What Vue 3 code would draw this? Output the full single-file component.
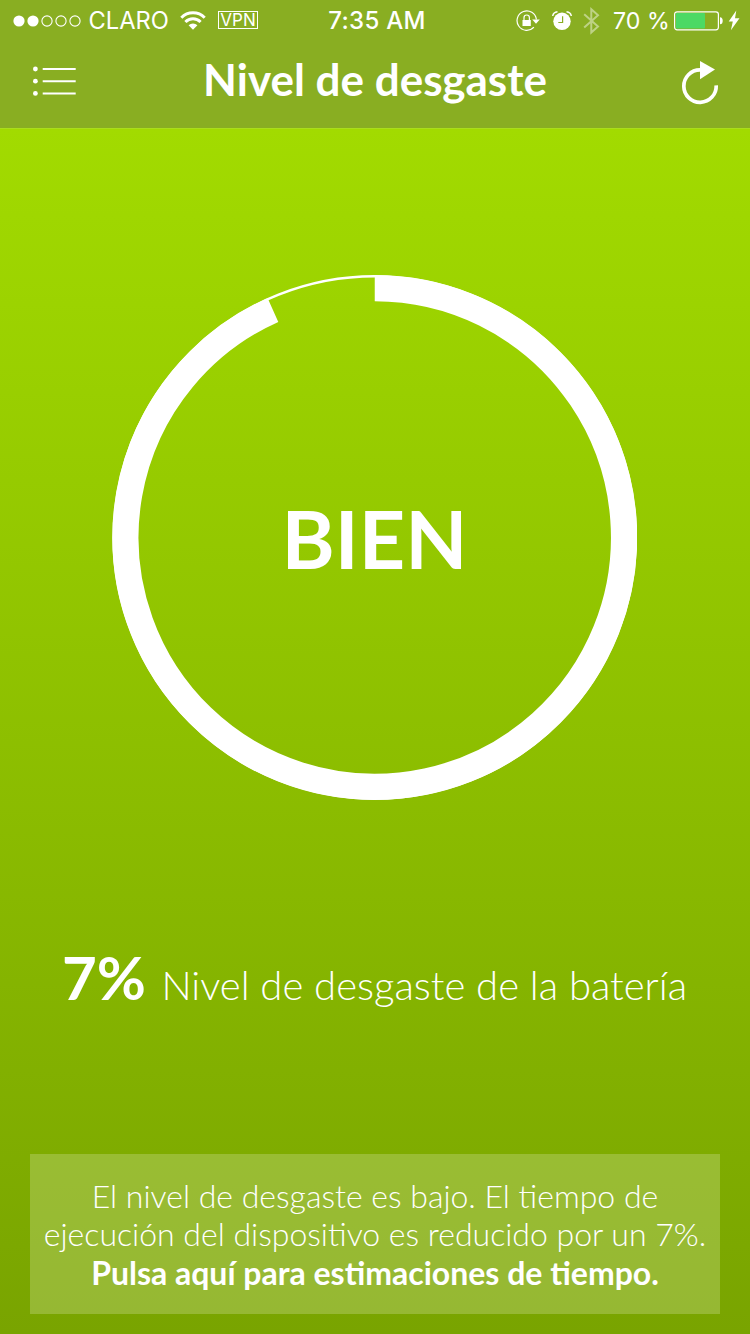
<script setup>
import { computed } from 'vue'

const wear = 7
const cx = 262.75
const cy = 262.5
const radius = 249.2
const gapDegrees = 24.1

const arc = computed(() => {
  const a = (gapDegrees * Math.PI) / 180
  const x = cx - radius * Math.sin(a)
  const y = cy - radius * Math.cos(a)
  return `M${cx} ${cy - radius}A${radius} ${radius} 0 1 1 ${x.toFixed(2)} ${y.toFixed(2)}`
})
</script>

<template>
  <div class="screen">
    <header class="top">
      <div class="status">
        <div class="side left">
          <svg class="signal" width="68" height="12" viewBox="0 0 68 12">
            <circle cx="6" cy="6" r="5.6" fill="#fff" />
            <circle cx="20" cy="6" r="5.6" fill="#fff" />
            <circle v-for="x in [34, 48, 62]" :key="x" :cx="x" cy="6" r="5.1" fill="none" stroke="#fff" stroke-width="1.1" />
          </svg>
          <span class="carrier">CLARO</span>
          <svg class="wifi" width="26" height="19" viewBox="0 0 26 19">
            <g fill="none" stroke="#fff" stroke-width="3">
              <path d="M1.3 6.7a16.5 16.5 0 0 1 23.4 0" />
              <path d="M5.4 11a10.7 10.7 0 0 1 15.2 0" />
            </g>
            <path d="M8.6 14.3a6.2 6.2 0 0 1 8.8 0L13 18.7z" fill="#fff" />
          </svg>
          <span class="vpn">VPN</span>
        </div>
        <span class="clock">7:35 AM</span>
        <div class="side right">
          <svg class="lock" width="24" height="22" viewBox="0 0 24 22">
            <path d="M17.9 17.2A9.7 9.7 0 1 1 20.4 9.5" fill="none" stroke="#fff" stroke-width="1.2" />
            <path d="M16.2 9.4h7.6L20 13.8z" fill="#fff" />
            <path d="M6.5 10h8.3v6H6.5z" fill="#fff" />
            <path d="M8 10V7.7a2.7 2.7 0 0 1 5.4 0V10" fill="none" stroke="#fff" stroke-width="1.2" />
          </svg>
          <svg class="alarm" width="20" height="20" viewBox="0 0 20 20">
            <circle cx="10" cy="10.3" r="8.7" fill="#fff" />
            <path d="M10.6 5.3v6.2H6.3" fill="none" stroke="#89ae22" stroke-width="1.2" />
            <path d="M.7 5Q1.3 1.3 5.5.8M19.3 5Q18.7 1.3 14.5.8" fill="none" stroke="#fff" stroke-width="1.5" />
          </svg>
          <svg class="bluetooth" width="17" height="28" viewBox="0 0 17 28">
            <path d="M1.2 7.2L15 19.5L8.3 25.5V2.2L15 8.2L1.2 20.5" fill="none" stroke="#fff" stroke-opacity=".45" stroke-width="2" />
          </svg>
          <span class="charge">70 %</span>
          <svg class="battery" width="49" height="20" viewBox="0 0 49 20">
            <rect x=".6" y=".8" width="43.8" height="18" rx="2.5" fill="none" stroke="#fff" stroke-width="1.2" />
            <rect x="1.8" y="2" width="29.2" height="15.6" rx="1" fill="#4cd964" />
            <path d="M46 6.3q2.7 0 2.7 3.5T46 13.3z" fill="#fff" />
          </svg>
          <svg class="bolt" width="12" height="21" viewBox="0 0 12 21">
            <path d="M8.3.5L.7 11.5h4.1L2.9 20.3L11.5 8.2H7z" fill="#fff" />
          </svg>
        </div>
      </div>
      <nav class="nav">
        <svg class="menu" width="44" height="32" viewBox="0 0 44 32">
          <g v-for="y in [4, 16.2, 28.4]" :key="y">
            <circle cx="2.4" :cy="y" r="2.4" fill="#fff" />
            <path :d="`M9.7 ${y}h33`" stroke="#fff" stroke-width="2" />
          </g>
        </svg>
        <h1>Nivel de desgaste</h1>
        <svg class="refresh" width="38" height="44" viewBox="0 0 38 44">
          <path d="M19 8.9A16.2 16.2 0 1 0 35.2 24.3" fill="none" stroke="#fff" stroke-width="3.7" />
          <path d="M19 0L34 8.5L19 18.3z" fill="#fff" />
        </svg>
      </nav>
    </header>

    <main class="content">
      <div class="dial">
        <svg width="525" height="525" viewBox="0 0 525 525">
          <circle :cx="cx" :cy="cy" r="261.2" fill="none" stroke="#fff" stroke-width="2.6" />
          <path :d="arc" fill="none" stroke="#fff" stroke-width="26" />
        </svg>
        <strong class="verdict">BIEN</strong>
      </div>
      <p class="summary">
        <strong>{{ wear }}%</strong><span>Nivel de desgaste de la batería</span>
      </p>
      <section class="note">
        <span>El nivel de desgaste es bajo. El tiempo de</span>
        <span>ejecución del dispositivo es reducido por un {{ wear }}%.</span>
        <strong>Pulsa aquí para estimaciones de tiempo.</strong>
      </section>
    </main>
  </div>
</template>

<style>
body {
  margin: 0;
}
</style>

<style scoped>
.screen {
  width: 750px;
  height: 1334px;
  display: flex;
  flex-direction: column;
  overflow: hidden;
  color: #fff;
  font-family: Lato, "Liberation Sans", sans-serif;
  background: linear-gradient(#a2db00 128px, #79a400 1334px);
}
.top {
  height: 128px;
  flex: none;
  background: #89ae22;
  box-shadow: 0 1px #aade1c;
}
.status {
  height: 40px;
  display: grid;
  grid-template-columns: 1fr auto 1fr;
  align-items: center;
  font-family: Inter, "Liberation Sans", sans-serif;
  font-size: 24px;
  line-height: 38px;
}
.side {
  display: flex;
  align-items: center;
  white-space: nowrap;
}
.signal {
  margin: 1px 0 0 13px;
}
.carrier {
  margin: 2px 0 0 7.5px;
  width: 81px;
  font-size: 23.7px;
}
.wifi {
  margin-left: 10.5px;
}
.vpn {
  box-sizing: border-box;
  width: 40px;
  height: 18px;
  margin-left: 12px;
  border: 1px solid #fff;
  font-size: 17px;
  line-height: 17px;
  text-align: center;
}
.clock {
  padding: 2px 0 0 4px;
  font-weight: 500;
  letter-spacing: 0.3px;
}
.right {
  justify-content: flex-end;
}
.lock {
  margin-top: 1px;
}
.alarm {
  margin: 1px 0 0 12.5px;
}
.bluetooth {
  margin: 1px 0 0 11px;
}
.charge {
  margin: 2px 0 0 13px;
  width: 54px;
  font-size: 23.2px;
}
.battery {
  margin: 1px 0 0 7px;
}
.bolt {
  margin: 0 10px 0 5px;
}
.nav {
  height: 88px;
  display: flex;
  align-items: flex-start;
  justify-content: space-between;
}
.menu {
  margin: 25px 0 0 33px;
}
h1 {
  margin: 12px 8px 0 0;
  font-size: 44px;
  line-height: 54px;
  font-weight: 700;
  white-space: nowrap;
}
.refresh {
  margin: 21px 31px 0 0;
}
.content {
  flex: 1;
  display: flex;
  flex-direction: column;
  align-items: center;
}
.dial {
  display: grid;
  width: 525px;
  height: 525px;
  margin: 147px 1px 0 0;
  place-items: center;
}
.dial > * {
  grid-area: 1 / 1;
}
.verdict {
  font-size: 80.8px;
  line-height: 96px;
  font-weight: 700;
}
.summary {
  display: flex;
  align-items: baseline;
  margin: 141px 1px 0 0;
  line-height: 72px;
  white-space: nowrap;
}
.summary strong {
  font-size: 60px;
  font-weight: 700;
}
.summary span {
  margin-left: 15.5px;
  font-size: 40px;
  font-weight: 300;
}
.note {
  box-sizing: border-box;
  display: flex;
  flex-direction: column;
  align-items: center;
  width: 690px;
  height: 160px;
  margin: auto 0 20px;
  padding-top: 23px;
  background: rgba(216, 229, 168, 0.3);
  font-size: 32px;
  line-height: 38px;
  font-weight: 300;
  white-space: nowrap;
}
.note strong {
  margin-top: 1px;
  font-weight: 700;
}
</style>
